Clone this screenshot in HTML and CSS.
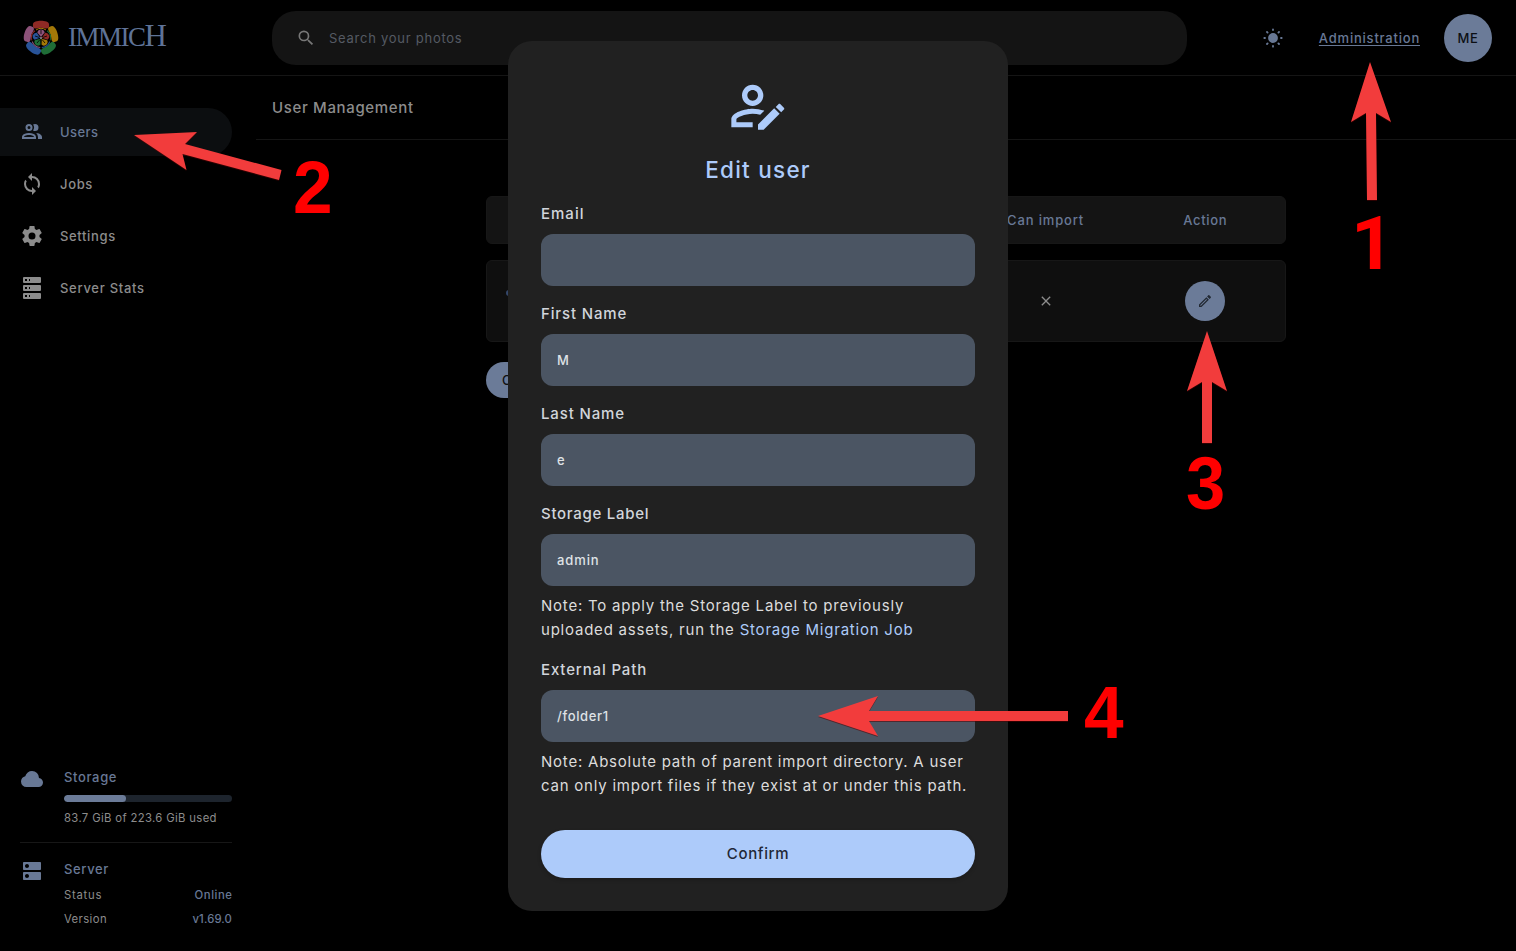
FILE: index.html
```html
<!DOCTYPE html>
<html lang="en">
<head>
<meta charset="utf-8">
<title>User Management - Immich</title>
<link rel="stylesheet" href="styles.css">
</head>
<body>
<div class="app">
  <header class="topbar">
    <div class="brand">
      <svg class="flower" viewBox="-18 -18 36 36">
        <g>
          <path fill="#8f2a25" d="M-4.500-9.500C-8-9-8.300-11-8-14C-7.500-18.300 7.500-18.300 8-14C8.300-11 8-9 4.500-9.500Q0-11-4.500-9.500Z"/>
          <path fill="#a37808" transform="rotate(72)" d="M-4.500-9.500C-8-9-8.300-11-8-14C-7.500-18.300 7.500-18.300 8-14C8.300-11 8-9 4.500-9.500Q0-11-4.500-9.500Z"/>
          <path fill="#1f6d37" transform="rotate(144)" d="M-4.500-9.500C-8-9-8.300-11-8-14C-7.500-18.300 7.500-18.300 8-14C8.300-11 8-9 4.500-9.500Q0-11-4.500-9.500Z"/>
          <path fill="#285398" transform="rotate(216)" d="M-4.500-9.500C-8-9-8.300-11-8-14C-7.500-18.300 7.500-18.300 8-14C8.300-11 8-9 4.500-9.500Q0-11-4.500-9.500Z"/>
          <path fill="#8c5279" transform="rotate(288)" d="M-4.500-9.500C-8-9-8.300-11-8-14C-7.500-18.300 7.500-18.300 8-14C8.300-11 8-9 4.500-9.500Q0-11-4.500-9.500Z"/>
        </g>
        <g fill="none" stroke-width="1">
          <path stroke="#a37808" d="M-5-8Q0-11.500 5-8"/>
          <path stroke="#1f6d37" transform="rotate(72)" d="M-5-8Q0-11.500 5-8"/>
          <path stroke="#285398" transform="rotate(144)" d="M-5-8Q0-11.500 5-8"/>
          <path stroke="#8c5279" transform="rotate(216)" d="M-5-8Q0-11.500 5-8"/>
          <path stroke="#8f2a25" transform="rotate(288)" d="M-5-8Q0-11.500 5-8"/>
        </g>
        <g>
          <path fill="#8c5279" d="M0-1L-3.700-5.500Q-3-8.500 0-8.500T3.700-5.500Z"/>
          <path fill="#8f2a25" transform="rotate(72)" d="M0-1L-3.700-5.500Q-3-8.500 0-8.500T3.700-5.500Z"/>
          <path fill="#a37808" transform="rotate(144)" d="M0-1L-3.700-5.500Q-3-8.500 0-8.500T3.700-5.500Z"/>
          <path fill="#1f6d37" transform="rotate(216)" d="M0-1L-3.700-5.500Q-3-8.500 0-8.500T3.700-5.500Z"/>
          <path fill="#285398" transform="rotate(288)" d="M0-1L-3.700-5.500Q-3-8.500 0-8.500T3.700-5.500Z"/>
        </g>
        <path stroke="#000" stroke-width=".8" d="M0-4V-8M0 2V10M-2-.6L-6-2M2-.6L6-2M-1 1.500L-4 5M1 1.500L4 5"/>
        <circle r="1" fill="#999"/>
      </svg>
      <span class="wordmark">IMMIC<span class="tall">H</span></span>
    </div>
    <div class="search">
      <svg class="i20" viewBox="0 0 24 24"><path d="M9.500 3A6.500 6.500 0 0 1 16 9.500C16 11.110 15.410 12.590 14.440 13.730L14.710 14H15.500L20.500 19L19 20.500L14 15.500V14.710L13.730 14.440C12.590 15.410 11.110 16 9.500 16A6.500 6.500 0 0 1 9.500 3M9.500 5A4.500 4.500 0 1 0 9.500 14A4.500 4.500 0 0 0 9.500 5Z"/></svg>
      <span class="t-search">Search your photos</span>
    </div>
    <div class="tools">
      <svg class="sun" viewBox="-12 -12 24 24"><circle r="4"/><path d="M0-8V-8.700M0 8V8.700M-8 0H-8.700M8 0H8.700M-5.400-5.400L-6-6M5.400-5.400L6-6M-5.400 5.400L-6 6M5.400 5.400L6 6"/></svg>
      <a class="admin">Administration</a>
      <span class="avatar">ME</span>
    </div>
  </header>
  <div class="body">
    <aside class="sidebar">
      <nav class="nav">
        <a class="item active"><svg class="i24" viewBox="0 0 24 24"><path d="M13.070 10.410A5 5 0 0 0 13.070 4.590A3.390 3.390 0 0 1 15 4A3.500 3.500 0 0 1 15 11A3.390 3.390 0 0 1 13.070 10.410M5.500 7.500A3.500 3.500 0 1 1 9 11A3.500 3.500 0 0 1 5.500 7.500M7.500 7.500A1.500 1.500 0 1 0 9 6A1.500 1.500 0 0 0 7.500 7.500M16 17V19H2V17S2 13 9 13 16 17 16 17M14 17C13.860 16.220 12.670 15 9 15S4.070 16.310 4 17M15.950 13A5.320 5.320 0 0 1 18 17V19H22V17S22 13.370 15.940 13Z"/></svg><span class="t-users">Users</span></a>
        <a class="item"><svg class="i24" viewBox="0 0 24 24"><path d="M12 18A6 6 0 0 1 6 12C6 11 6.250 10.030 6.700 9.200L5.240 7.740C4.460 8.970 4 10.430 4 12A8 8 0 0 0 12 20V23L16 19L12 15M12 4V1L8 5L12 9V6A6 6 0 0 1 18 12C18 13 17.750 13.970 17.300 14.800L18.760 16.260C19.540 15.030 20 13.570 20 12A8 8 0 0 0 12 4Z"/></svg><span class="t-jobs">Jobs</span></a>
        <a class="item"><svg class="i24" viewBox="0 0 24 24"><path d="M12,15.5A3.5,3.5 0 0,1 8.5,12A3.5,3.5 0 0,1 12,8.5A3.5,3.5 0 0,1 15.5,12A3.5,3.5 0 0,1 12,15.5M19.43,12.97C19.47,12.65 19.5,12.33 19.5,12C19.5,11.67 19.47,11.34 19.43,11L21.54,9.37C21.73,9.22 21.78,8.95 21.66,8.73L19.66,5.27C19.54,5.05 19.27,4.96 19.05,5.05L16.56,6.05C16.04,5.66 15.5,5.32 14.87,5.07L14.5,2.42C14.46,2.18 14.25,2 14,2H10C9.75,2 9.54,2.18 9.5,2.42L9.13,5.07C8.5,5.32 7.96,5.66 7.44,6.05L4.95,5.05C4.73,4.96 4.46,5.05 4.34,5.27L2.34,8.73C2.21,8.95 2.27,9.22 2.46,9.37L4.57,11C4.53,11.34 4.5,11.67 4.5,12C4.5,12.33 4.53,12.65 4.57,12.97L2.46,14.63C2.27,14.78 2.21,15.05 2.34,15.27L4.34,18.73C4.46,18.95 4.73,19.03 4.95,18.95L7.44,17.94C7.96,18.34 8.5,18.68 9.13,18.93L9.5,21.58C9.54,21.82 9.75,22 10,22H14C14.25,22 14.46,21.82 14.5,21.58L14.87,18.93C15.5,18.67 16.04,18.34 16.56,17.94L19.05,18.95C19.27,19.03 19.54,18.95 19.66,18.73L21.66,15.27C21.78,15.05 21.73,14.78 21.54,14.63L19.43,12.97Z"/></svg><span class="t-settings">Settings</span></a>
        <a class="item"><svg class="i24" viewBox="0 0 24 24"><path d="M4,1H20A1,1 0 0,1 21,2V6A1,1 0 0,1 20,7H4A1,1 0 0,1 3,6V2A1,1 0 0,1 4,1M4,9H20A1,1 0 0,1 21,10V14A1,1 0 0,1 20,15H4A1,1 0 0,1 3,14V10A1,1 0 0,1 4,9M4,17H20A1,1 0 0,1 21,18V22A1,1 0 0,1 20,23H4A1,1 0 0,1 3,22V18A1,1 0 0,1 4,17M9,5H10V3H9V5M9,13H10V11H9V13M9,21H10V19H9V21M5,3V5H7V3H5M5,11V13H7V11H5M5,19V21H7V19H5Z"/></svg><span class="t-stats">Server Stats</span></a>
      </nav>
      <div class="status">
        <section class="block storage">
          <svg class="i24" viewBox="0 0 24 24"><path d="M6.500 20Q4.220 20 2.610 18.430 1 16.850 1 14.580 1 12.630 2.170 11.100 3.350 9.570 5.250 9.150 5.880 6.850 7.750 5.430 9.630 4 12 4 14.930 4 16.960 6.040 19 8.070 19 11 20.730 11.200 21.860 12.500 23 13.780 23 15.500 23 17.380 21.690 18.690 20.380 20 18.500 20Z"/></svg>
          <div class="info">
            <div class="head"><span class="t-storage">Storage</span></div>
            <div class="meter"><div class="fill" style="width:37%"></div></div>
            <div class="usage">83.7 GiB of 223.6 GiB used</div>
          </div>
        </section>
        <section class="block server">
          <svg class="i24" viewBox="0 0 24 24"><path d="M20 13H4c-.55 0-1 .45-1 1v6c0 .55.45 1 1 1h16c.55 0 1-.45 1-1v-6c0-.55-.45-1-1-1zM7 19c-1.100 0-2-.9-2-2s.9-2 2-2 2 .9 2 2-.9 2-2 2zM20 3H4c-.55 0-1 .45-1 1v6c0 .55.45 1 1 1h16c.55 0 1-.45 1-1V4c0-.55-.45-1-1-1zM7 9c-1.100 0-2-.9-2-2s.9-2 2-2 2 .9 2 2-.9 2-2 2z"/></svg>
          <div class="info">
            <div class="head"><span class="t-server">Server</span></div>
            <div class="row"><span class="t-status">Status</span><span class="t-online">Online</span></div>
            <div class="row"><span class="t-version">Version</span><span class="t-number">v1.69.0</span></div>
          </div>
        </section>
      </div>
    </aside>
    <main class="main">
      <div class="pagehead">User Management</div>
      <div class="content">
        <div class="tablehead"><span></span><span></span><span></span><span class="t-import">Can import</span><span class="t-action">Action</span></div>
        <div class="tablerow">
          <span class="mail"></span><span></span><span></span>
          <span class="cell"><svg class="i16" viewBox="0 0 24 24"><path d="M19,6.410L17.590,5L12,10.590L6.410,5L5,6.410L10.590,12L5,17.590L6.410,19L12,13.410L17.590,19L19,17.590L13.410,12L19,6.410Z"/></svg></span>
          <span class="cell"><span class="edit"><svg class="i16" viewBox="0 0 24 24"><path d="M14.060,9L15,9.940L5.920,19H5V18.080L14.060,9M17.660,3C17.410,3 17.150,3.100 16.960,3.290L15.130,5.120L18.880,8.870L20.710,7.040C21.100,6.650 21.100,6 20.710,5.630L18.370,3.290C18.170,3.090 17.920,3 17.660,3M14.060,6.190L3,17.250V21H6.750L17.810,9.940L14.060,6.190Z"/></svg></span></span>
        </div>
        <div class="create">C</div>
      </div>
    </main>
  </div>
</div>
<div class="scrim">
  <form class="modal">
    <svg class="i64" viewBox="0 0 24 24"><path d="M2 17V20H10V18.110H3.900V17C3.900 16.360 7.030 14.900 10 14.900C10.960 14.910 11.910 15.040 12.830 15.280L14.350 13.760C12.950 13.290 11.500 13.030 10 13C7.330 13 2 14.330 2 17M10 4C7.790 4 6 5.790 6 8S7.790 12 10 12 14 10.210 14 8 12.210 4 10 4M10 10C8.900 10 8 9.110 8 8S8.900 6 10 6 12 6.900 12 8 11.110 10 10 10M21.700 13.350L20.700 14.350L18.650 12.350L19.650 11.350C19.860 11.140 20.210 11.140 20.420 11.350L21.700 12.630C21.910 12.840 21.910 13.140 21.700 13.350M12 18.940L18.060 12.880L20.110 14.880L14.110 20.950H12V18.940"/></svg>
    <h1 class="title">Edit user</h1>
    <div class="field"><label class="l-email">Email</label><div class="input"></div></div>
    <div class="field"><label class="l-first">First Name</label><div class="input">M</div></div>
    <div class="field"><label class="l-last">Last Name</label><div class="input">e</div></div>
    <div class="field"><label class="l-label">Storage Label</label><div class="input v-admin">admin</div>
      <p class="note">Note: To apply the Storage Label to previously<br>uploaded assets, run the <a class="link">Storage Migration Job</a></p></div>
    <div class="field"><label class="l-path">External Path</label><div class="input">/folder1</div>
      <p class="note">Note: Absolute path of parent import directory. A user<br>can only import files if they exist at or under this path.</p></div>
    <div class="confirm">Confirm</div>
  </form>
</div>
<svg class="marks" viewBox="0 0 1516 951">
  <g class="arrows">
    <path d="M1370 62L1391 122L1376 113L1377 200H1367L1366 113L1351 122Z"/>
    <path d="M134 135L197 132L185 144L281.500 170L279 180L182.500 154L186.500 170Z"/>
    <path d="M1207 331L1227 391L1212 382V443H1202V382L1187 391Z"/>
    <path d="M818 716L878 696L869 711H1068V721H869L878 736Z"/>
  </g>
  <g class="digits"><text class="one" x="1351" y="269">1</text><text transform="translate(293 213) scale(.95 1)">2</text><text transform="translate(1186 509) scale(.94 1)">3</text><text transform="translate(1084 738) scale(.95 1)">4</text></g>
</svg>
</body>
</html>
```
FILE: styles.css
```css
* { box-sizing: border-box; }
body { margin: 0; background: #000; color: #8c8c8c; font: 500 13px/20px Inter, "Open Sans", sans-serif; letter-spacing: .65px; overflow: hidden; }
svg { display: block; fill: currentColor; flex: none; }
.i16 { width: 16px; height: 16px; }
.i20 { width: 20px; height: 20px; }
.i24 { width: 24px; height: 24px; }
.i64 { width: 64px; height: 64px; margin: 0 auto; }
.app { height: 951px; display: flex; flex-direction: column; }
.topbar { height: 76px; border-bottom: 1px solid #151515; display: flex; align-items: center; padding-right: 24px; }
.brand { width: 272px; padding-left: 23px; display: flex; align-items: center; gap: 9px; }
.flower { width: 36px; height: 36px; }
.wordmark { font: 400 27px/36px "Liberation Serif", serif; color: #5f7397; letter-spacing: -1.5px; white-space: nowrap; padding-bottom: 3px; }
.tall { font-size: 31px; }
.search { width: 915px; height: 54px; border-radius: 24px; background: #141414; display: flex; align-items: center; gap: 13px; padding-left: 24px; color: #777; }
.t-search { color: #555a63; font-weight: 400; letter-spacing: .74px; }
.tools { flex: 1; display: flex; align-items: center; justify-content: flex-end; color: #687895; }
.sun { width: 24px; height: 24px; margin-right: 34px; stroke: currentColor; stroke-width: 1.800; stroke-linecap: round; }
.admin { text-decoration: underline; text-underline-offset: 2px; margin-right: 24px; letter-spacing: .78px; }
.avatar { width: 48px; height: 48px; border-radius: 50%; background: #6b7b98; color: #0c0f14; display: grid; place-items: center; }
.body { flex: 1; display: flex; min-height: 0; }
.sidebar { width: 256px; padding: 32px 24px 20px 0; display: flex; flex-direction: column; justify-content: space-between; }
.nav { display: flex; flex-direction: column; gap: 4px; }
.item { height: 48px; display: flex; align-items: center; gap: 16px; padding-left: 20px; border-radius: 0 24px 24px 0; }
.active { background: #0c0e10; color: #687895; }
.t-users { letter-spacing: .4px; }
.t-stats { letter-spacing: .72px; }
.status { padding-left: 20px; }
.block { display: flex; align-items: flex-start; gap: 20px; color: #687895; }
.storage { height: 76px; border-bottom: 1px solid #171717; }
.server { height: 88px; padding-top: 16px; }
.info { flex: 1; }
.head { height: 20px; }
.meter { height: 7px; border-radius: 4px; background: #1d242d; margin-top: 8px; overflow: hidden; }
.fill { height: 7px; border-radius: 4px; background: #6b7b98; }
.usage { font-size: 11.300px; line-height: 16px; margin-top: 8px; color: #8c8c8c; font-weight: 400; letter-spacing: .35px; white-space: nowrap; }
.row { display: flex; justify-content: space-between; font-size: 11.300px; line-height: 24px; }
.t-status, .t-version { color: #8c8c8c; font-weight: 400; }
.t-status { letter-spacing: .75px; }
.t-version { letter-spacing: .4px; }
.t-online { letter-spacing: .55px; margin-right: -.5px; }
.t-number { letter-spacing: .13px; }
.server .head { height: 24px; }
.main { flex: 1; }
.pagehead { height: 64px; border-bottom: 1px solid #151515; display: flex; align-items: center; padding-left: 16px; font-size: 15px; }
.content { width: 800px; margin: 56px 0 0 230px; }
.tablehead, .tablerow { display: grid; grid-template-columns: repeat(5, 1fr); align-items: center; justify-items: center; border: 1px solid #171717; border-radius: 6px; }
.tablehead { height: 48px; background: #141414; color: #687895; }
.t-import { letter-spacing: .85px; }
.tablerow { height: 82px; margin-top: 16px; background: #0f0f0f; }
.mail { width: 122px; height: 6px; border-radius: 3px; background: #34476a; margin-top: -16px; }
.edit { width: 40px; height: 40px; border-radius: 50%; background: #6b7b98; color: #222933; display: grid; place-items: center; }
.create { width: 110px; height: 36px; margin-top: 20px; border-radius: 18px; background: #6b7b98; color: #111; display: flex; align-items: center; padding-left: 16px; }
.scrim { position: absolute; inset: 0; display: grid; place-items: center; padding-top: 1px; }
.modal { width: 500px; height: 870px; border-radius: 24px; background: #212121; padding: 33px; color: #d1d5db; font-size: 15px; line-height: 24px; }
.modal .i64, .title { color: #adcbfa; }
.title { font-size: 22.500px; line-height: 32px; font-weight: 500; letter-spacing: 1.250px; margin: 16px 0; text-align: center; }
.field { margin-bottom: 16px; }
.field label { display: block; height: 24px; line-height: 23px; margin-bottom: 8px; letter-spacing: .85px; }
.field .l-email { letter-spacing: 1px; }
.field .l-label { letter-spacing: .72px; }
.input { height: 52px; border-radius: 12px; background: #4b5563; padding: 0 16px; display: flex; align-items: center; font-size: 13px; color: #dfe2e6; }
.v-admin { letter-spacing: .9px; }
.note { margin: 8px 0 0; white-space: nowrap; color: #dcdcdc; font-weight: 400; letter-spacing: .78px; }
.link { color: #adcbfa; }
.confirm { height: 48px; margin-top: 32px; border-radius: 24px; background: #adcbfa; color: #1f2937; display: grid; place-items: center; box-shadow: 0 2px 4px #0003; }
.marks { position: absolute; inset: 0; width: 1516px; height: 951px; }
.arrows { fill: #f23c3c; filter: drop-shadow(0 1px 0 #5008); }
.digits { fill: #f00; font: 700 75px "Liberation Sans", Arial, sans-serif; letter-spacing: 0; }
.one { font-family: Roboto, sans-serif; }
```
